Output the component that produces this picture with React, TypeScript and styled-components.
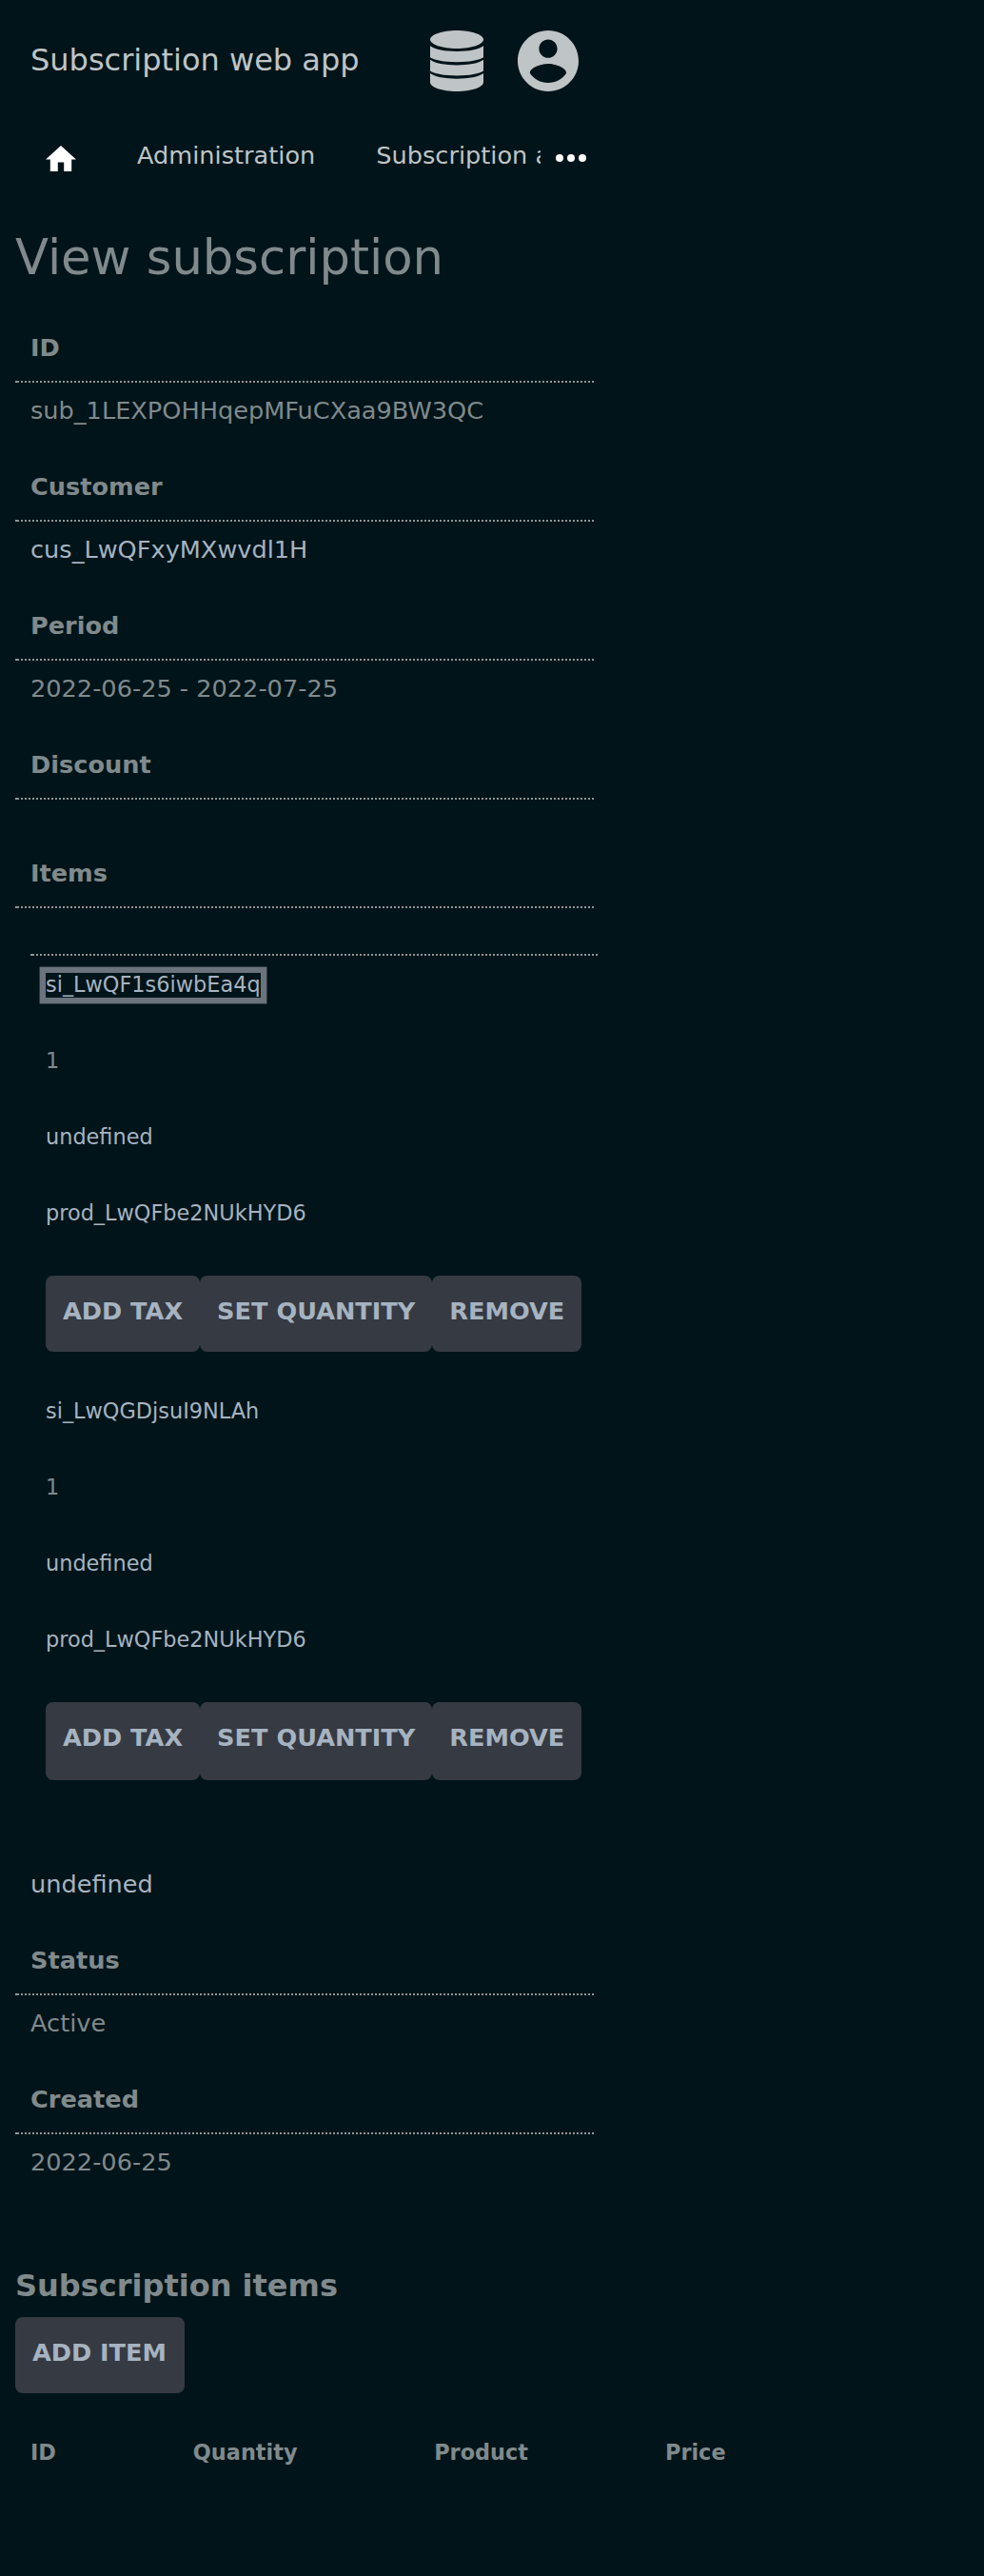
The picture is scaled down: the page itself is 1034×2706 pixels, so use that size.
import React from "react";
import styled, { createGlobalStyle, css } from "styled-components";

const Global = createGlobalStyle`
  * { box-sizing: border-box; }
  html, body { margin: 0; background: #001419; }
  body {
    font: 25.6px/40px "DejaVu Sans", sans-serif;
    color: #808a8c;
  }
  a { color: #a6b3c0; text-decoration: none; }
`;

const dottedRule = css`
  background-image:
    linear-gradient(#8c9698, #8c9698),
    repeating-linear-gradient(90deg, transparent 0 2px, #8c9698 2px 4px);
  background-repeat: no-repeat;
  background-size: 2px 2px, 100% 2px;
`;

const Page = styled.div`
  width: 1034px;
  height: 2706px;
  overflow: hidden;
`;

const Header = styled.header`
  display: flex;
  align-items: center;
  width: 640px;
  height: 128px;
  padding: 0 32px;
  color: #bfc4c6;
`;

const Brand = styled.div`
  flex: 1;
  font-size: 32px;
  line-height: 48px;
  padding-bottom: 2px;
`;

const HeaderIcons = styled.div`
  display: flex;
  gap: 36px;
  svg { display: block; fill: currentColor; }
`;

const Nav = styled.nav`
  display: flex;
  width: 640px;
  height: 72px;
  padding: 15px 24px 0 48px;
  color: #bfc4c6;
`;

const HomeLink = styled.div`
  width: 96px;
  padding-top: 9.8px;
  svg { display: block; fill: #fff; }
`;

const NavItems = styled.div`
  display: flex;
  gap: 64px;
  width: 424px;
  overflow: hidden;
  white-space: nowrap;
  line-height: 40px;
`;

const More = styled.div`
  padding: 19px 0 0 16px;
  svg { display: block; fill: #fff; }
`;

const Title = styled.h1`
  margin: 0;
  padding: 32px 0 0 16px;
  height: 126px;
  font-size: 51.2px;
  font-weight: 400;
  line-height: 76px;
`;

const Details = styled.dl`
  width: 608px;
  margin: 0 0 0 16px;
`;

const Term = styled.dt`
  ${dottedRule}
  background-position: left bottom;
  height: 76px;
  padding: 19px 16px 0;
  font-weight: 700;
`;

const Value = styled.dd<{ $empty?: boolean }>`
  margin: 0;
  height: ${(p) => (p.$empty ? 38 : 70)}px;
  padding: 9px 16px 0;
`;

const ItemsValue = styled.dd`
  margin: 0;
  height: 1066px;
  padding: 48px 0 0 16px;
`;

const ItemTable = styled.div`
  ${dottedRule}
  background-position: left top;
  width: 596px;
  height: 957px;
  padding-top: 2px;
  font-size: 22.4px;
`;

const Cell = styled.div`
  height: 80px;
  padding: 10px 16px 0;
`;

const ItemLink = styled.a<{ $focused?: boolean }>`
  ${(p) =>
    p.$focused &&
    css`
      display: inline-block;
      height: 26px;
      line-height: 24px;
      margin-top: 8px;
      vertical-align: top;
      box-shadow: 0 0 0 6.4px #6b737d;
    `}
`;

const Actions = styled.div<{ $height: number }>`
  display: flex;
  height: ${(p) => p.$height}px;
  padding: 16px 16px 32px;
`;

const Button = styled.button`
  display: flex;
  flex: none;
  align-items: flex-start;
  min-height: 80px;
  margin: 0;
  padding: 17.5px 18.1px 0 17.9px;
  border: 0;
  border-radius: 7.68px;
  background: #363a42;
  color: #a6b3c0;
  font: 700 25.6px/39px "DejaVu Sans", sans-serif;
  text-transform: uppercase;
  white-space: nowrap;
`;

const AddButton = styled(Button)`
  width: 178px;
`;

const Section = styled.section`
  padding: 65px 0 0 16px;
`;

const SectionTitle = styled.h2`
  margin: 0;
  height: 57px;
  font-size: 32px;
  line-height: 48px;
`;

const Columns = styled.div`
  display: grid;
  grid-template-columns: 170.8px 253.4px 242.8px 1fr;
  padding: 42px 16px 0;
  font-size: 22.4px;
  font-weight: 700;
`;

const items = [
  { id: "si_LwQF1s6iwbEa4q", quantity: 1, focused: true, actionsHeight: 128 },
  { id: "si_LwQGDjsuI9NLAh", quantity: 1, focused: false, actionsHeight: 130 },
];

function DatabaseIcon() {
  return (
    <svg width="56" height="64" viewBox="0 0 56 64">
      <path d="M28 0C43.5 0 56 4.5 56 9.5S43.5 19 28 19 0 14.5 0 9.5 12.5 0 28 0z" />
      <path d="M0 16.3C5 20 15.500 22 28 22s23-2 28-5.700V28.300c-4 3-15 4.900-28 4.900S4 31.300 0 28.300z" />
      <path d="M0 30.700C5 34.400 15.500 36.400 28 36.400s23-2 28-5.700V42.600c-4 3-15 4.900-28 4.900s-24-1.900-28-4.900z" />
      <path d="M0 45C5 48.700 15.500 50.700 28 50.700s23-2 28-5.700V54.500C56 59.500 43.500 64 28 64S0 59.500 0 54.500z" />
    </svg>
  );
}

function AccountIcon() {
  return (
    <svg width="64" height="64" viewBox="2 2 20 20">
      <path d="M12 2C6.480 2 2 6.480 2 12s4.480 10 10 10 10-4.480 10-10S17.520 2 12 2zm0 3c1.660 0 3 1.340 3 3s-1.340 3-3 3-3-1.340-3-3 1.340-3 3-3zm0 14.200c-2.500 0-4.710-1.280-6-3.220.030-1.990 4-3.080 6-3.080 1.990 0 5.970 1.090 6 3.080-1.290 1.940-3.500 3.220-6 3.220z" />
    </svg>
  );
}

export default function App() {
  return (
    <Page>
      <Global />
      <Header>
        <Brand>Subscription web app</Brand>
        <HeaderIcons>
          <DatabaseIcon />
          <AccountIcon />
        </HeaderIcons>
      </Header>
      <Nav>
        <HomeLink>
          <svg width="32" height="27.2" viewBox="2 3 20 17">
            <path d="M10 20v-6h4v6h5v-8h3L12 3 2 12h3v8z" />
          </svg>
        </HomeLink>
        <NavItems>
          <span>Administration</span>
          <span>Subscription administration</span>
        </NavItems>
        <More>
          <svg width="32" height="8" viewBox="0 0 32 8">
            <circle cx="4" cy="4" r="4" />
            <circle cx="16" cy="4" r="4" />
            <circle cx="28" cy="4" r="4" />
          </svg>
        </More>
      </Nav>
      <Title>View subscription</Title>
      <Details>
        <Term>ID</Term>
        <Value>sub_1LEXPOHHqepMFuCXaa9BW3QC</Value>
        <Term>Customer</Term>
        <Value>
          <a>cus_LwQFxyMXwvdl1H</a>
        </Value>
        <Term>Period</Term>
        <Value>2022-06-25 - 2022-07-25</Value>
        <Term>Discount</Term>
        <Value $empty />
        <Term>Items</Term>
        <ItemsValue>
          <ItemTable>
            {items.map((item) => (
              <div key={item.id}>
                <Cell>
                  <ItemLink $focused={item.focused}>{item.id}</ItemLink>
                </Cell>
                <Cell>{item.quantity}</Cell>
                <Cell>
                  <a>undefined</a>
                </Cell>
                <Cell>
                  <a>prod_LwQFbe2NUkHYD6</a>
                </Cell>
                <Actions $height={item.actionsHeight}>
                  <Button>Add tax</Button>
                  <Button>Set quantity</Button>
                  <Button>Remove</Button>
                </Actions>
              </div>
            ))}
          </ItemTable>
          <a>undefined</a>
        </ItemsValue>
        <Term>Status</Term>
        <Value>Active</Value>
        <Term>Created</Term>
        <Value>2022-06-25</Value>
      </Details>
      <Section>
        <SectionTitle>Subscription items</SectionTitle>
        <AddButton>Add item</AddButton>
        <Columns>
          <span>ID</span>
          <span>Quantity</span>
          <span>Product</span>
          <span>Price</span>
        </Columns>
      </Section>
    </Page>
  );
}
